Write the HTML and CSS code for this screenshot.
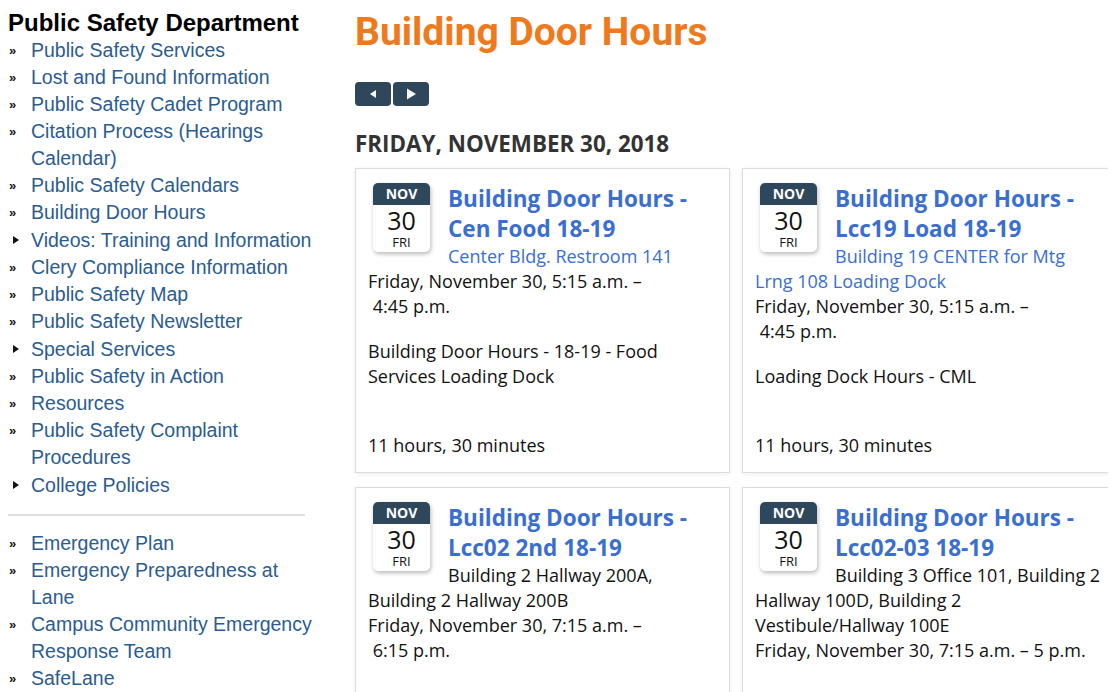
FILE: index.html
```html
<!DOCTYPE html>
<html lang="en">
<head>
<meta charset="UTF-8">
<meta name="viewport" content="width=device-width, initial-scale=1.0">
<title>Building Door Hours</title>
<link rel="stylesheet" href="styles.css">
</head>
<body>

<div class="page">
    <!-- Department menu -->
    <aside class="sidebar">
        <h2 class="dept">Public Safety Department</h2>
        <ul class="menu">
            <li><a href="#">Public Safety Services</a></li>
            <li><a href="#">Lost and Found Information</a></li>
            <li><a href="#">Public Safety Cadet Program</a></li>
            <li><a href="#">Citation Process (Hearings Calendar)</a></li>
            <li><a href="#">Public Safety Calendars</a></li>
            <li><a href="#">Building Door Hours</a></li>
            <li class="has-sub"><a href="#">Videos: Training and Information</a></li>
            <li><a href="#">Clery Compliance Information</a></li>
            <li><a href="#">Public Safety Map</a></li>
            <li><a href="#">Public Safety Newsletter</a></li>
            <li class="has-sub"><a href="#">Special Services</a></li>
            <li><a href="#">Public Safety in Action</a></li>
            <li><a href="#">Resources</a></li>
            <li><a href="#">Public Safety Complaint Procedures</a></li>
            <li class="has-sub"><a href="#">College Policies</a></li>
        </ul>

        <hr class="divider">

        <ul class="menu">
            <li><a href="#">Emergency Plan</a></li>
            <li><a href="#">Emergency Preparedness at Lane</a></li>
            <li><a href="#">Campus Community Emergency Response Team</a></li>
            <li><a href="#">SafeLane</a></li>
        </ul>
    </aside>

    <!-- Calendar listing -->
    <main class="content">
        <h1 class="title">Building Door Hours</h1>

        <div class="pager">
            <button class="pager-btn" title="Previous day">
                <svg width="10" height="10" viewBox="0 0 10 10"><polygon points="8,1 8,9 2,5" fill="#fff"/></svg>
            </button>
            <button class="pager-btn" title="Next day">
                <svg width="12" height="12" viewBox="0 0 12 12"><polygon points="2,0.5 2,11.5 11,6" fill="#fff"/></svg>
            </button>
        </div>

        <h2 class="day">Friday, November 30, 2018</h2>

        <div class="events">
            <article class="event">
                <div class="cal"><span class="cal-month">Nov</span><span class="cal-date">30</span><span class="cal-dow">Fri</span></div>
                <h3 class="event-title"><a href="#">Building Door Hours - Cen Food 18-19</a></h3>
                <a class="event-loc" href="#">Center Bldg. Restroom 141</a>
                <p class="event-time">Friday, November 30, 5:15 a.m. –<br>&nbsp;4:45 p.m.</p>
                <p class="event-desc">Building Door Hours - 18-19 - Food Services Loading Dock</p>
                <p class="event-len">11 hours, 30 minutes</p>
            </article>

            <article class="event">
                <div class="cal"><span class="cal-month">Nov</span><span class="cal-date">30</span><span class="cal-dow">Fri</span></div>
                <h3 class="event-title"><a href="#">Building Door Hours - Lcc19 Load 18-19</a></h3>
                <a class="event-loc" href="#">Building 19 CENTER for Mtg Lrng 108 Loading Dock</a>
                <p class="event-time">Friday, November 30, 5:15 a.m. –<br>&nbsp;4:45 p.m.</p>
                <p class="event-desc">Loading Dock Hours - CML</p>
                <p class="event-len">11 hours, 30 minutes</p>
            </article>

            <article class="event">
                <div class="cal"><span class="cal-month">Nov</span><span class="cal-date">30</span><span class="cal-dow">Fri</span></div>
                <h3 class="event-title"><a href="#">Building Door Hours - Lcc02 2nd 18-19</a></h3>
                <span class="event-place">Building 2 Hallway 200A, Building 2 Hallway 200B</span>
                <p class="event-time">Friday, November 30, 7:15 a.m. –<br>&nbsp;6:15 p.m.</p>
                <p class="event-len">11 hours</p>
            </article>

            <article class="event">
                <div class="cal"><span class="cal-month">Nov</span><span class="cal-date">30</span><span class="cal-dow">Fri</span></div>
                <h3 class="event-title"><a href="#">Building Door Hours - Lcc02-03 18-19</a></h3>
                <span class="event-place">Building 3 Office 101, Building 2 Hallway 100D, Building 2 Vestibule/Hallway 100E</span>
                <p class="event-time">Friday, November 30, 7:15 a.m. – 5 p.m.</p>
                <p class="event-len">9 hours, 45 minutes</p>
            </article>
        </div>
    </main>
</div>

</body>
</html>
```

FILE: styles.css
```css
html {
    overflow: hidden;
}

body {
    margin: 8px;
    font-family: 'Liberation Sans', Arial, sans-serif;
    color: #111;
    background-color: #fff;
}

.page {
    display: flex;
    align-items: flex-start;
}

/* Sidebar */
.sidebar {
    flex: 0 0 312px;
}

.dept {
    margin: 1px 0 0;
    font-size: 24px;
    line-height: 28px;
    font-weight: bold;
    color: #000;
}

.menu {
    list-style: none;
    margin: 0;
    padding: 0;
}

.menu li {
    display: flex;
    font-size: 19.5px;
    line-height: 27px;
}

.menu li::before {
    content: '\00bb';
    box-sizing: border-box;
    flex: 0 0 23px;
    padding-left: 1px;
    font-size: 13px;
    font-weight: bold;
    color: #111;
}

.menu li.has-sub {
    margin-top: 1px;
}

.menu li.has-sub::before {
    content: '';
    flex: 0 0 0;
    height: 0;
    padding: 0;
    margin: 9px 12px 0 5px;
    border-left: 6px solid #111;
    border-top: 4.5px solid transparent;
    border-bottom: 4.5px solid transparent;
}

.menu a {
    color: #2b5c8f;
    text-decoration: none;
}

.divider {
    margin: 15px 15px 14px -2px;
    border: 0;
    border-top: 2px solid #dedede;
}

/* Main content */
.content {
    flex: 0 0 762px;
    margin-left: 35px;
    font-family: 'Open Sans', sans-serif;
}

.title {
    margin: 1px 0 0;
    font-family: Roboto, sans-serif;
    font-size: 39px;
    line-height: 46px;
    font-weight: bold;
    color: #ef7a1d;
}

.pager {
    display: flex;
    gap: 2px;
    margin-top: 27px;
}

.pager-btn {
    display: flex;
    align-items: center;
    justify-content: center;
    width: 36px;
    height: 24px;
    padding: 0;
    border: none;
    border-radius: 4px;
    background-color: #2e475b;
    cursor: pointer;
}

.day {
    margin: 24px 0 10px;
    font-size: 22.4px;
    line-height: 28px;
    font-weight: bold;
    text-transform: uppercase;
    color: #333;
}

.events {
    display: grid;
    grid-template-columns: 375px 375px;
    gap: 14px 12px;
}

.event {
    padding: 14px 10px 14px 12px;
    border: 1px solid #dcdcdc;
    box-shadow: 0 1px 5px rgba(0, 0, 0, 0.07);
    background-color: #fff;
    font-size: 18px;
    line-height: 25px;
    color: #111;
}

.cal {
    float: left;
    display: flex;
    flex-direction: column;
    width: 57px;
    margin: 0 18px 10px 5px;
    padding-bottom: 3px;
    border-radius: 5px;
    overflow: hidden;
    background-color: #fff;
    box-shadow: 1px 2px 4px rgba(0, 0, 0, 0.28);
    text-align: center;
}

.cal-month {
    height: 22px;
    background-color: #2e475b;
    color: #fff;
    font-size: 14px;
    line-height: 22px;
    font-weight: bold;
    text-transform: uppercase;
}

.cal-date {
    font-size: 25px;
    line-height: 30px;
    color: #111;
}

.cal-dow {
    font-size: 13px;
    line-height: 14px;
    text-transform: uppercase;
    color: #111;
}

.event-title {
    margin: 1px 0 0;
    font-size: 22.5px;
    line-height: 30px;
    font-weight: bold;
}

.event-title a,
.event-loc {
    color: #3a6ed0;
    text-decoration: none;
}

.event-time,
.event-desc,
.event-len {
    margin: 0;
}

.event-desc {
    margin-top: 20px;
}

.event-len {
    margin-top: 44px;
}
```
